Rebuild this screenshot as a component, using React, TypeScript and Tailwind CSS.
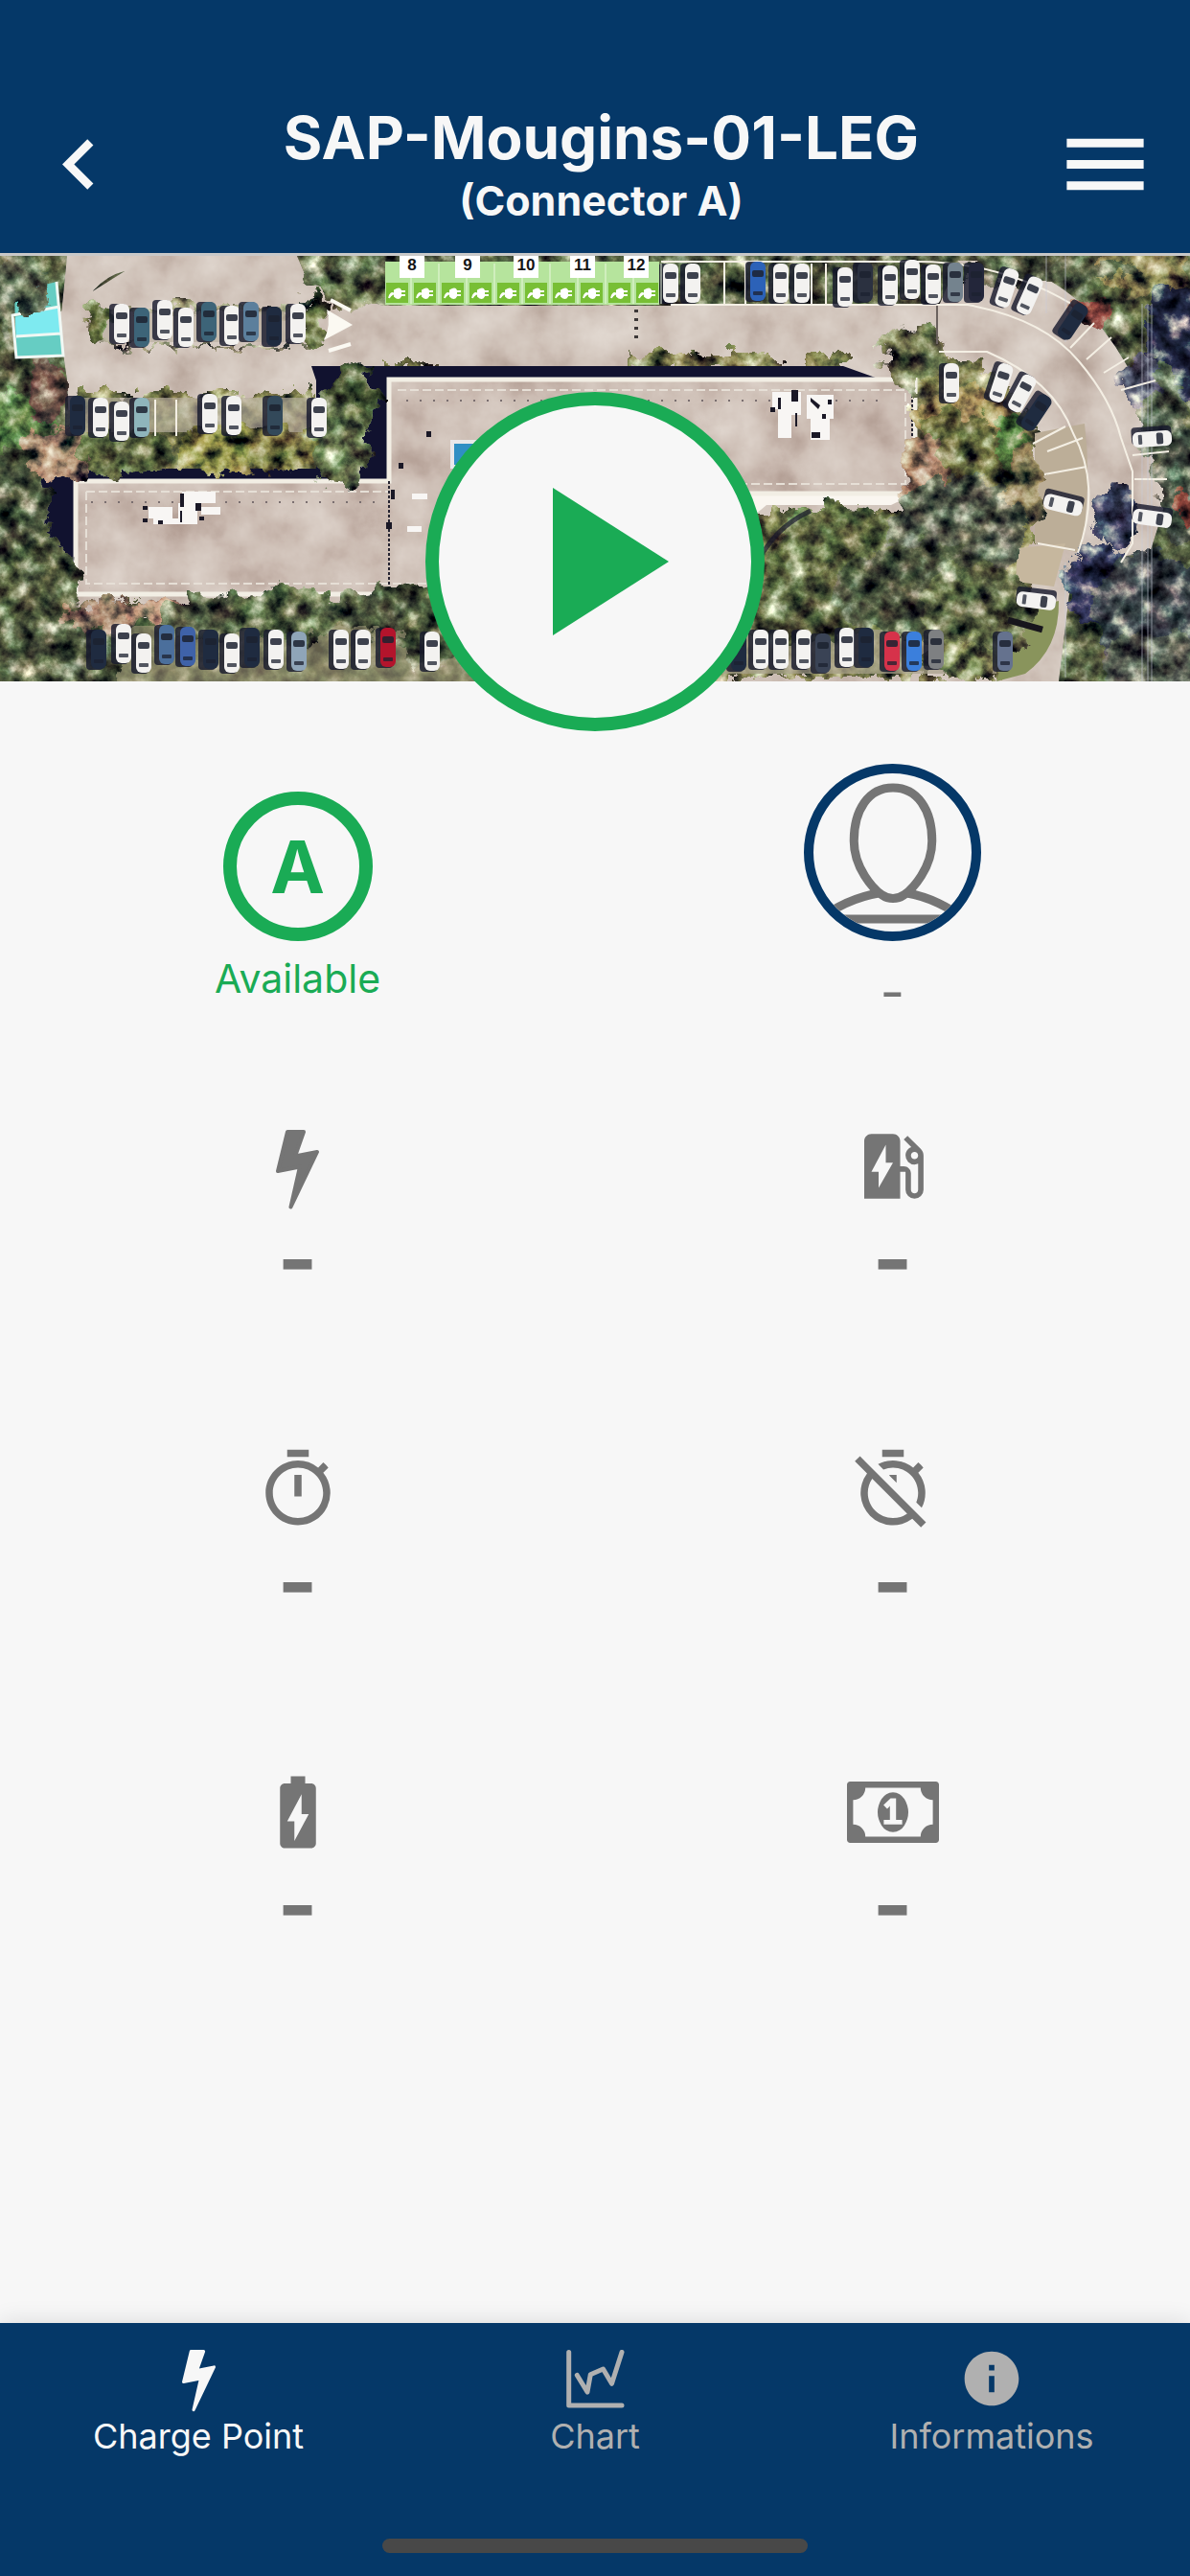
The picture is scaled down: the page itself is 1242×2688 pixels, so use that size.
import type { ReactNode } from "react";
import {
  MdBatteryChargingFull,
  MdEvStation,
  MdInfo,
  MdMenu,
  MdNavigateBefore,
  MdOutlineTimer,
  MdOutlineTimerOff,
  MdPlayArrow,
} from "react-icons/md";

function BoltIcon({ className }: { className: string }) {
  return (
    <svg viewBox="0 -6 45 89" className={className} fill="currentColor" stroke="currentColor" strokeWidth="4" strokeLinejoin="round" aria-hidden="true">
      <path d="M12 2 L29 2 L20 27.5 L43 23 L15.5 80.5 L25 38.5 L2 43 Z" />
    </svg>
  );
}

function MoneyIcon({ className }: { className: string }) {
  return (
    <svg viewBox="0 256 1920 1280" className={className} fill="currentColor" aria-hidden="true">
      <path d="M768 1152h384v-96h-128v-448h-114l-148 137 77 80q42-37 55-57h2v288h-128v96zm512-256q0 70-21 142t-59.5 134-101.5 101-138 39-138-39-101.5-101-59.5-134-21-142 21-142 59.5-134 101.5-101 138-39 138 39 101.5 101 59.5 134 21 142zm512 256v-512q-106 0-181-75t-75-181h-1152q0 106-75 181t-181 75v512q106 0 181 75t75 181h1152q0-106 75-181t181-75zm128-832v1152q0 26-19 45t-45 19h-1792q-26 0-45-19t-19-45v-1152q0-26 19-45t45-19h1792q26 0 45 19t19 45z" />
    </svg>
  );
}

function ChartIcon({ className }: { className: string }) {
  return (
    <svg viewBox="10 13 61 61" className={className} fill="none" stroke="currentColor" strokeWidth="5" strokeLinecap="round" strokeLinejoin="round" aria-hidden="true">
      <path d="M12.7 15.5V71H68" />
      <path d="M21.3 39.5L32 57L35.3 38.7L48.5 33L57.5 48.3L68 15.5" />
    </svg>
  );
}

function PersonIcon({ className }: { className: string }) {
  return (
    <svg viewBox="0 0 164 164" className={className} fill="none" stroke="currentColor" strokeWidth="9" aria-hidden="true">
      <path d="M0 156C22 138 44 128 69 124M164 156C140 138 120 128 96 124" />
      <path d="M22 151H140" />
      <path d="M82.500 15C108 15 123 38 123 70C123 98 103 120 94 126C87 131 78 131 71 126C62 120 42 98 42 70C42 38 57 15 82.500 15Z" />
    </svg>
  );
}

type CarSpec = [number, number, string, number?];

const W = "#f3f2f0";
const N = "#1f2b40";
const T = "#3d6478";

const cars: CarSpec[] = [
  [127, 70, W], [148, 74, T], [172, 66, W], [194, 74, W], [218, 68, T], [242, 72, W], [262, 68, "#5c7f9c"], [286, 73, N], [311, 70, W],
  [81, 166, N], [105, 168, W], [127, 172, W], [148, 168, "#8fb5bb"], [219, 164, W], [244, 166, W], [287, 166, "#33495a"], [333, 168, W],
  [103, 410, N], [129, 404, W], [150, 414, W], [174, 405, "#4b6f9c"], [196, 407, "#3f62a8"], [220, 410, N], [242, 414, W], [263, 408, N], [288, 410, W], [312, 412, "#8fa5b8"], [356, 410, W], [379, 410, W], [405, 408, "#b3142c"], [451, 412, W],
  [700, 28, W], [723, 28, W], [791, 26, "#2c62b8"], [815, 28, W], [837, 28, W], [882, 32, W], [903, 27, "#2b3140"], [929, 30, W], [952, 24, W], [974, 29, W], [997, 27, "#74838e"], [1019, 27, "#23263a"], [1051, 33, W, 18], [1075, 41, W, 24], [1120, 68, N, 34],
  [993, 132, W], [1045, 132, W, 18], [1067, 143, W, 28], [1082, 163, N, 34],
  [1203, 191, W, 86], [1203, 274, W, 98], [1110, 260, W, 104], [1082, 360, W, 97],
  [771, 412, N], [794, 410, W], [815, 410, W], [839, 410, W], [859, 414, "#3a4355"], [884, 408, W], [904, 408, N], [931, 412, "#d6324a"], [954, 412, "#3b7fdc"], [977, 410, "#7e8082"], [1049, 412, "#65728e"],
];

function Car({ spec }: { spec: CarSpec }) {
  const [x, y, color, angle = 0] = spec;
  return (
    <g transform={`translate(${x} ${y}) rotate(${angle})`}>
      <rect x="-13" y="-20" width="18" height="42" rx="4" fill="#15182c" opacity=".8" />
      <rect x="-8" y="-20" width="16" height="41" rx="6" fill={color} />
      <rect x="-6" y="-11" width="12" height="7" rx="2" fill="#1c2230" opacity=".85" />
      <rect x="-5" y="11" width="10" height="4" rx="1" fill="#1c2230" opacity=".75" />
    </g>
  );
}

const trees: [number, number, number, number, string][] = [
  [22, 190, 42, 48, "#6a9050"], [15, 270, 36, 70, "#5a6748"], [40, 350, 42, 60, "#646e4a"], [70, 420, 60, 40, "#5d6849"], [15, 40, 36, 40, "#69765a"],
  [48, 140, 20, 34, "#7c5a4f"], [62, 205, 40, 26, "#b89578"], [366, 150, 28, 38, "#57683f"], [352, 196, 34, 44, "#748557"], [285, 200, 46, 26, "#969150"], [225, 200, 40, 26, "#a29e50"], [130, 205, 50, 24, "#6f7c4b"],
  [104, 70, 13, 24, "#66733f"], [328, 70, 14, 26, "#757f4b"],
  [110, 375, 46, 16, "#ac8a70"], [170, 372, 40, 14, "#c89a80"], [220, 378, 50, 24, "#646e4e"], [300, 375, 60, 28, "#68784f"], [400, 370, 50, 24, "#606a4a"], [450, 390, 34, 36, "#5d6b48"],
  [1010, 170, 55, 34, "#b09a60"], [1000, 220, 50, 60, "#7a7c48"], [1056, 200, 16, 36, "#5f9048"], [965, 230, 22, 44, "#b58a6e"], [1070, 240, 20, 44, "#9a8a60"],
  [860, 290, 44, 30, "#80985c"], [880, 330, 80, 70, "#6e7a4a"], [830, 370, 60, 40, "#687248"], [1000, 290, 70, 60, "#656c58"], [960, 350, 90, 50, "#5b6549"], [1020, 370, 60, 50, "#6d774e"], [1000, 420, 44, 20, "#8a945c"],
  [955, 105, 34, 34, "#7a7e54"], [1205, 30, 60, 50, "#69744a"], [1190, 10, 50, 30, "#9c935c"], [1230, 90, 36, 60, "#2a3050"], [1215, 170, 24, 60, "#5a6850"], [1232, 240, 22, 60, "#4b5648"], [1165, 270, 26, 32, "#444a6c"], [1150, 345, 38, 44, "#3a4068"], [1200, 370, 60, 60, "#4a5258"], [1210, 430, 60, 40, "#676e60"], [1190, 130, 20, 26, "#646780"], [1140, 62, 22, 14, "#a05048"], [1238, 264, 10, 20, "#94483e"],
  [350, 25, 34, 16, "#667350"], [370, 42, 34, 12, "#748054"], [1080, 14, 110, 12, "#5e6a4c"], [830, 3, 160, 8, "#687150"], [520, 2, 130, 6, "#5e6849"],
];

const bays = [
  [8, 430], [9, 488], [10, 549], [11, 608], [12, 664],
];

const vents = Array.from({ length: 36 }, (_, i) => i);

function SiteMap() {
  return (
    <svg viewBox="0 0 1242 444" preserveAspectRatio="xMidYMid slice" className="block h-[444px] w-full" role="img" aria-label="Aerial view of the charging site">
      <defs>
        <filter id="leaves" x="-10%" y="-10%" width="120%" height="120%" colorInterpolationFilters="sRGB">
          <feTurbulence type="fractalNoise" baseFrequency="0.05" numOctaves="5" seed="7" result="noise" />
          <feDisplacementMap in="SourceGraphic" in2="noise" scale="34" xChannelSelector="R" yChannelSelector="G" result="shape" />
          <feColorMatrix in="noise" type="matrix" values="1.5 0 0.15 0 -0.39  1.5 0.1 0 0 -0.36  1.3 0 0 0 -0.21  0 0 0 0 1" result="tone" />
          <feBlend in="tone" in2="shape" mode="hard-light" result="mix" />
          <feComposite in="mix" in2="shape" operator="in" />
        </filter>
        <filter id="ground" x="0" y="0" width="100%" height="100%" colorInterpolationFilters="sRGB">
          <feTurbulence type="fractalNoise" baseFrequency="0.02" numOctaves="5" seed="3" result="noise" />
          <feColorMatrix in="noise" type="matrix" values="0.9 0 0 0 0.1  0.9 0 0 0 0.08  0.85 0 0 0 0.11  0 0 0 0 1" result="tone" />
          <feBlend in="tone" in2="SourceGraphic" mode="soft-light" result="mix" />
          <feComposite in="mix" in2="SourceGraphic" operator="in" />
        </filter>
      </defs>

      <rect width="1242" height="444" fill="#5c6548" />
      <g filter="url(#leaves)">
        <rect x="-40" y="-40" width="1322" height="524" fill="#646e4a" />
      </g>

      <g filter="url(#ground)">
        <path d="M130 16Q95 24 70 80L60 100L70 0H310L322 28L400 52H980L1000 5H1050Q1120 30 1150 75Q1215 160 1216 260L1200 310L1120 320L1105 444H560V378H80L70 130L60 60Z" fill="#cfc3b9" />
      </g>
      <g filter="url(#leaves)">
        <path d="M78 142H330V230H68ZM400 114H480V120H400ZM655 102H812V118H655ZM840 102H886V118H840ZM935 106H1010Q1056 126 1080 180V320L1050 440H710V266H950Z" fill="#8a8954" />
        <path d="M105 52H325V60H105ZM102 92H325V96H102Z" fill="#a5a380" />
        <path d="M66 360H600V386H66Z" fill="#777950" />
      </g>
      <path d="M76 386H560V444H85Z" fill="#a39c7c" opacity=".6" />
      <path d="M700 390H1040V436H700Z" fill="#a8a18c" opacity=".7" />
      <path d="M98 58H322V90H98ZM76 148H345V184H76Z" fill="#b9afa0" opacity=".65" />
      <path d="M1080 185L1132 175Q1140 240 1128 310L1080 300Z" fill="#bcae98" />
      <path d="M1062 305L1112 300L1100 345L1060 340Z" fill="#c6b79e" />
      <path d="M1040 444L1062 370L1105 360Q1106 410 1070 436Z" fill="#89945c" />

      <path d="M325 115H880L922 130H406V233H78V330L60 324L30 250L34 222H330V130Z" fill="#11122f" />

      <g filter="url(#ground)">
        <path d="M78 235H406V129H955V248H700V352H78Z" fill="#cbbdb3" />
      </g>
      <path d="M700 248H955L930 260H800L770 285H700Z" fill="#faf6f0" />
      <path d="M79 235H406V129H955V248H700M79 235V353H600" fill="none" stroke="#f2eee4" strokeWidth="5" />
      <path d="M90 246H406M90 246V342H600M415 140H945V238H700" fill="none" stroke="#e6dfd6" strokeWidth="2" strokeDasharray="9 4" />
      <path d="M406 235V353M952 140V235" fill="none" stroke="#262431" strokeWidth="2" strokeDasharray="3 2" />
      <g fill="#7a6f70">
        {vents.map((i) => (
          <rect key={i} x={424 + i * 14} y="150" width="2" height="2" />
        ))}
        {vents.slice(0, 22).map((i) => (
          <rect key={i} x={95 + i * 14} y="256" width="2" height="2" />
        ))}
      </g>
      <g fill="#f8f6f4">
        <path d="M190 246H225V258H190ZM155 262H180V274H155ZM186 258H206V280H186ZM210 262H230V270H210ZM160 274H190V280H160Z" />
        <path d="M806 142H836V166H826V190H812V160H806ZM842 145H870V170H866V192H846V170H842ZM430 248H446V254H430ZM425 282H440V288H425Z" />
      </g>
      <g fill="#1a1826">
        <path d="M188 248H192V262H188ZM204 258H210V266H204ZM149 261H154V265H149ZM149 274H154V278H149ZM165 276H170V280H165ZM208 272H213V276H208ZM188 266H190V278H188Z" />
        <path d="M826 140H833V152H826ZM804 158H809V163H804ZM812 148H815V160H812ZM830 164H832V178H830ZM847 184H856V190H847ZM846 148L856 156L854 160L846 152ZM858 165H862V170H858ZM864 150H868V155H864Z" />
        <path d="M408 244H412V254H408ZM403 278H409V285H403ZM445 183H450V189H445ZM416 216H421V222H416Z" />
      </g>
      <path d="M472 194H500V220H472Z" fill="#2f8fc4" stroke="#e8e8ea" strokeWidth="4" />

      <g filter="url(#leaves)">
        {trees.map(([x, y, rx, ry, color], i) => (
          <ellipse key={i} cx={x} cy={y} rx={rx} ry={ry} fill={color} />
        ))}
      </g>
      <path d="M782 336C800 296 820 278 846 266" fill="none" stroke="#15152a" strokeWidth="5" opacity=".7" />

      <path d="M15 38L59 27L66 104L17 106Z" fill="#66cdc3" />
      <path d="M16 64L62 54L64 80L17 84Z" fill="#7eeaf0" />
      <path d="M59 27L66 104L17 106L13 62L62 53M17 84L64 81" fill="none" stroke="#f0f8f4" strokeWidth="3" />
      <g filter="url(#leaves)">
        <ellipse cx="30" cy="44" rx="22" ry="16" fill="#69765a" />
      </g>
      <path d="M341 56L368 72L338 88Q346 72 341 56Z" fill="#fbf9f2" />
      <path d="M345 46L366 57M343 99L366 92" stroke="#fbf9f2" strokeWidth="4" />

      <g fill="none" stroke="#f4efe4" strokeWidth="2">
        <path d="M690 6H950Q1040 4 1118 50M700 51H1010Q1090 66 1126 110Q1160 150 1170 190L1182 225V300L1170 320" />
        <path d="M980 100H1030Q1100 130 1120 185Q1150 240 1125 310" />
        <path d="M756 6V50M778 6V50M847 8V50M862 8V50M1117 96L1142 70M1134 108L1160 85M1152 122L1178 106M1170 140L1206 130M1182 208L1220 204M1184 233H1218M1078 196L1112 178M1093 204L1130 190M1090 228L1134 220M1083 300L1122 307M162 150V188M184 150V188" />
      </g>
      <path d="M1192 50V444M1198 50V444M1202 50V444M1112 0V90M1092 0V60M1112 320V440" fill="none" stroke="#c8ccd8" strokeWidth="1" opacity=".6" />
      <path d="M664 56V90" stroke="#3d3838" strokeWidth="4" strokeDasharray="3 6" />
      <path d="M1052 380L1088 390" stroke="#17151c" strokeWidth="7" />
      <path d="M978 52V92" stroke="#6b625e" strokeWidth="2" />

      <g>
        {cars.map((spec, i) => (
          <Car key={i} spec={spec} />
        ))}
      </g>

      <rect x="402" y="6" width="286" height="45" fill="#b6e49d" />
      {Array.from({ length: 10 }, (_, i) => (
        <g key={i} transform={`translate(${403 + i * 29} 28)`}>
          <rect width="23" height="21" fill="#78bf35" />
          <path d="M3 16Q5 9 8 12M9 8Q14 5 15 8V14Q13 18 9 14ZM16 9H20M16 13H20" fill="#fff" stroke="#fff" strokeWidth="2" />
          <path d="M26 -20V22" stroke="#e9f8dd" strokeWidth="1" />
        </g>
      ))}
      {bays.map(([label, x]) => (
        <g key={label}>
          <rect x={x - 13} y="0" width="26" height="23" fill="#fff" />
          <text x={x} y="15" textAnchor="middle" fill="#151515" className="font-['Liberation_Sans',sans-serif] text-[17px] font-bold">
            {label}
          </text>
        </g>
      ))}
    </svg>
  );
}

function Metric({ icon, label }: { icon: ReactNode; label: string }) {
  return (
    <div className="flex flex-col items-center" aria-label={label}>
      <div className="flex h-[90px] items-center justify-center">{icon}</div>
      <div className="mt-1 text-[90px] leading-[96px] font-bold">-</div>
    </div>
  );
}

function Tab({ icon, label, active = false }: { icon: ReactNode; label: string; active?: boolean }) {
  return (
    <a href="#" className={active ? "flex flex-col items-center text-[#f7f7f7]" : "flex flex-col items-center text-[#b0b0b0]"}>
      <span className="flex h-[68px] items-center">{icon}</span>
      <span className="mt-1 text-[36px] leading-[44px]">{label}</span>
    </a>
  );
}

export default function App() {
  return (
    <div className="flex min-h-screen flex-col bg-[#f7f7f7] font-['Inter',sans-serif] text-[#757575]">
      <header className="flex items-center border-b-[3px] border-[#c8c8c8] bg-[#053868] pt-[106px] pr-[35px] pb-7 pl-[30px] text-[#f7f7f7]">
        <button type="button" aria-label="Back">
          <MdNavigateBefore size={105} />
        </button>
        <div className="flex-1 pl-5 text-center">
          <h1 className="text-[62px] leading-[76px] font-bold">SAP-Mougins-01-LEG</h1>
          <p className="text-[43px] leading-[54px] font-bold">(Connector A)</p>
        </div>
        <button type="button" aria-label="Menu">
          <MdMenu size={107} />
        </button>
      </header>

      <main className="flex-1">
        <SiteMap />
        <button
          type="button"
          aria-label="Start charging"
          className="relative mx-auto -mt-[302px] flex size-[354px] items-center justify-center rounded-full border-[14px] border-[#1aab55] bg-[#f7f7f7] text-[#1aab55]"
        >
          <MdPlayArrow size={264} className="shrink-0" />
        </button>

        <div className="grid grid-cols-2 pt-[34px]">
          <div className="flex flex-col items-center text-[#1aab55]">
            <div className="flex h-[185px] items-end">
              <div className="flex size-[156px] items-center justify-center rounded-full border-[14px] border-[#1aab55] text-[76px] font-bold">A</div>
            </div>
            <div className="mt-[14px] text-[41px] leading-[50px]">Available</div>
          </div>
          <div className="flex flex-col items-center">
            <div className="flex size-[185px] items-center justify-center overflow-hidden rounded-full border-[10px] border-[#053868]">
              <PersonIcon className="size-full" />
            </div>
            <div className="mt-7 text-[56px] leading-[50px]">-</div>
          </div>
        </div>

        <div className="grid grid-cols-2 gap-y-[147px] pt-[112px]">
          <Metric label="Power" icon={<BoltIcon className="h-[89px] w-[45px]" />} />
          <Metric label="Energy" icon={<MdEvStation size={90} />} />
          <Metric label="Duration" icon={<MdOutlineTimer size={90} />} />
          <Metric label="Inactivity" icon={<MdOutlineTimerOff size={90} />} />
          <Metric label="Battery level" icon={<MdBatteryChargingFull size={90} />} />
          <Metric label="Price" icon={<MoneyIcon className="h-16 w-24" />} />
        </div>
      </main>

      <nav className="bg-[#053868] pt-6 pb-6 shadow-[0_0_24px_rgba(0,0,0,0.12)]">
        <div className="grid grid-cols-3">
          <Tab active label="Charge Point" icon={<BoltIcon className="h-[70px] w-[35px]" />} />
          <Tab label="Chart" icon={<ChartIcon className="size-[61px]" />} />
          <Tab label="Informations" icon={<MdInfo size={68} />} />
        </div>
        <div className="mx-auto mt-[85px] h-[15px] w-[444px] rounded-full bg-[#484848]" />
      </nav>
    </div>
  );
}
